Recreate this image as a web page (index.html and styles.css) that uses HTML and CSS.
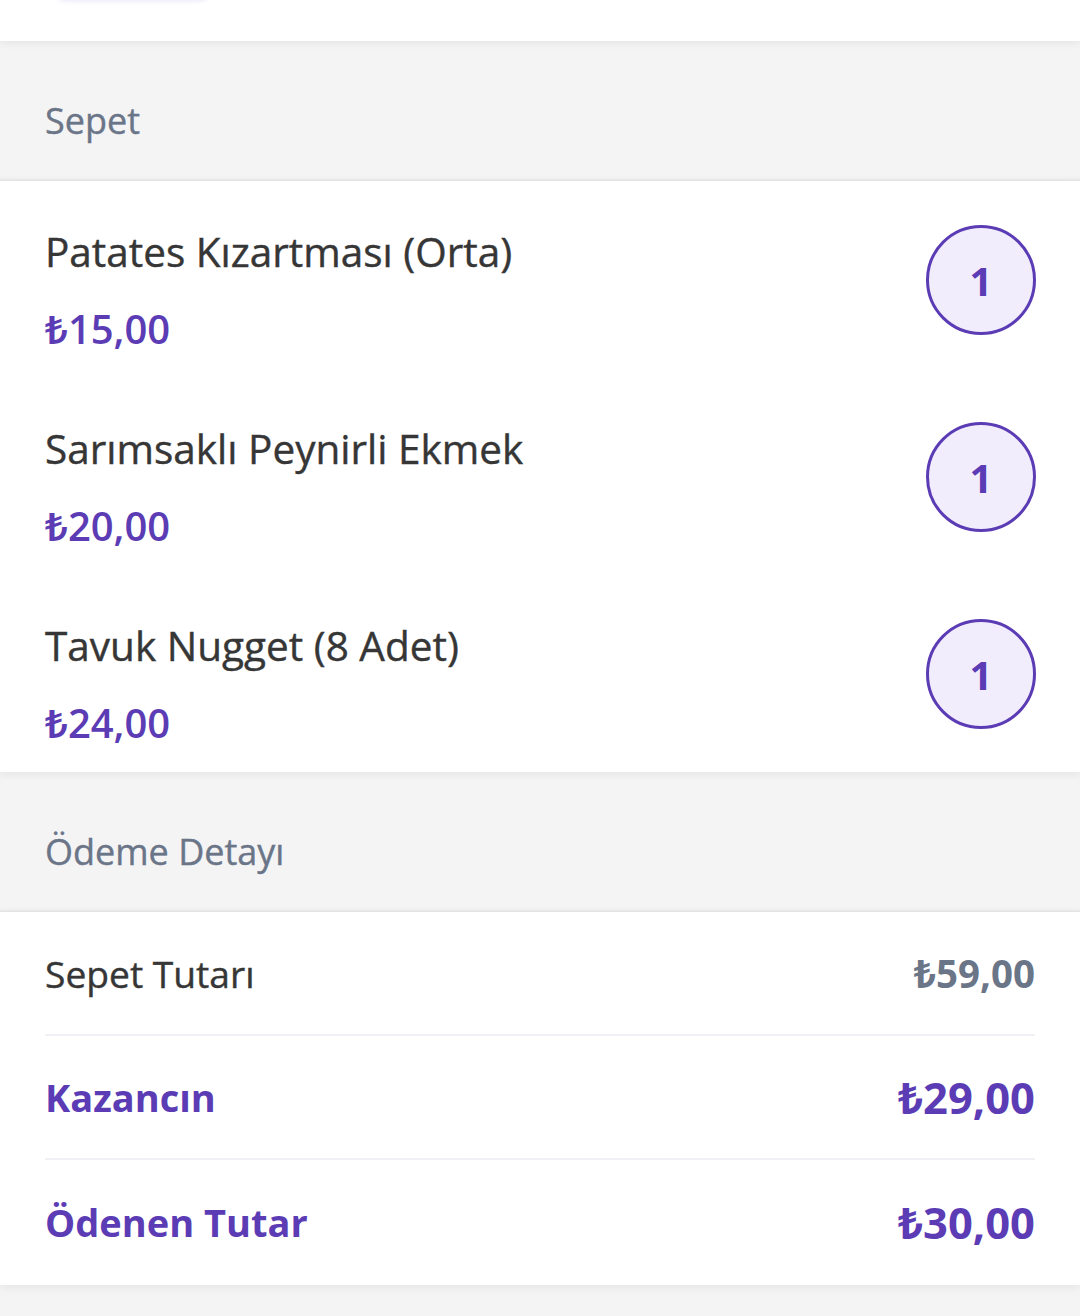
FILE: index.html
```html
<!DOCTYPE html>
<html lang="tr">
<head>
<meta charset="utf-8">
<link rel="stylesheet" href="styles.css">
</head>
<body>
<div class="page">
  <div class="top-card">
    <div class="ghost-btn"></div>
  </div>

  <div class="section-head">Sepet</div>

  <div class="card items">
    <div class="item">
      <div class="item-info">
        <div class="item-name">Patates Kızartması (Orta)</div>
        <div class="item-price">₺15,00</div>
      </div>
      <div class="qty">1</div>
    </div>
    <div class="item">
      <div class="item-info">
        <div class="item-name">Sarımsaklı Peynirli Ekmek</div>
        <div class="item-price">₺20,00</div>
      </div>
      <div class="qty">1</div>
    </div>
    <div class="item">
      <div class="item-info">
        <div class="item-name">Tavuk Nugget (8 Adet)</div>
        <div class="item-price">₺24,00</div>
      </div>
      <div class="qty">1</div>
    </div>
  </div>

  <div class="section-head">Ödeme Detayı</div>

  <div class="card summary">
    <div class="row">
      <span class="row-label">Sepet Tutarı</span>
      <span class="row-value muted">₺59,00</span>
    </div>
    <div class="row accent">
      <span class="row-label">Kazancın</span>
      <span class="row-value">₺29,00</span>
    </div>
    <div class="row accent">
      <span class="row-label">Ödenen Tutar</span>
      <span class="row-value">₺30,00</span>
    </div>
  </div>
</div>
</body>
</html>
```

FILE: styles.css
```css
* { box-sizing: border-box; }
html, body {
  margin: 0;
  padding: 0;
  background: #f4f4f5;
}
body {
  font-family: "Open Sans", "Noto Sans", sans-serif;
  width: 1080px;
  height: 1316px;
  overflow: hidden;
}
.page {
  display: flex;
  flex-direction: column;
}
.top-card {
  height: 41px;
  background: #fff;
  position: relative;
  z-index: 2;
  box-shadow: 0 2px 8px rgba(0, 0, 0, 0.07);
  padding-left: 55px;
  overflow: hidden;
}
.ghost-btn {
  width: 155px;
  height: 20px;
  margin-top: -20px;
  border-radius: 10px;
  background: #fff;
  box-shadow: 0 1px 5px rgba(90, 60, 180, 0.12);
}
.section-head {
  height: 140px;
  display: flex;
  align-items: center;
  padding: 18px 0 0 45px;
  font-size: 36px;
  color: #6b7588;
  -webkit-text-stroke: 0.4px #6b7588;
  background: #f4f4f5;
  box-shadow: inset 0 -4px 5px -3px rgba(0, 0, 0, 0.06);
}
.card {
  background: #fff;
  position: relative;
  z-index: 1;
  box-shadow: 0 3px 8px rgba(0, 0, 0, 0.06), 0 -1px 2px rgba(0, 0, 0, 0.04);
}
.items {
  height: 591px;
}
.item {
  height: 197px;
  display: flex;
  align-items: flex-start;
  justify-content: space-between;
  padding: 44px 45px 0 45px;
}
.item-name {
  font-size: 40.5px;
  line-height: 54px;
  color: #363636;
  -webkit-text-stroke: 0.4px #363636;
}
.item-price {
  font-size: 40px;
  line-height: 54px;
  font-weight: 600;
  color: #5b3cb5;
  margin-top: 23px;
}
.qty {
  width: 110px;
  height: 110px;
  border-radius: 50%;
  border: 3px solid #5b3cb5;
  background: #f1edfc;
  color: #5b3cb5;
  font-weight: 700;
  font-size: 40px;
  display: flex;
  align-items: center;
  justify-content: center;
  margin-right: -1px;
}
.summary {
  height: 373px;
  padding: 0 45px;
}
.row {
  height: 124px;
  display: flex;
  align-items: center;
  justify-content: space-between;
  border-bottom: 2px solid #f0f0f7;
  color: #363636;
}
.row:last-child {
  border-bottom: none;
}
.row-label {
  font-size: 37.2px;
  -webkit-text-stroke: 0.4px currentColor;
}
.row-value {
  font-size: 43.5px;
  font-weight: 700;
}
.row-value.muted {
  font-size: 38.5px;
  color: #6b7588;
}
.row.accent {
  color: #5b3cb5;
}
.row.accent .row-label {
  font-weight: 700;
  font-size: 38px;
  -webkit-text-stroke: 0;
}
```
